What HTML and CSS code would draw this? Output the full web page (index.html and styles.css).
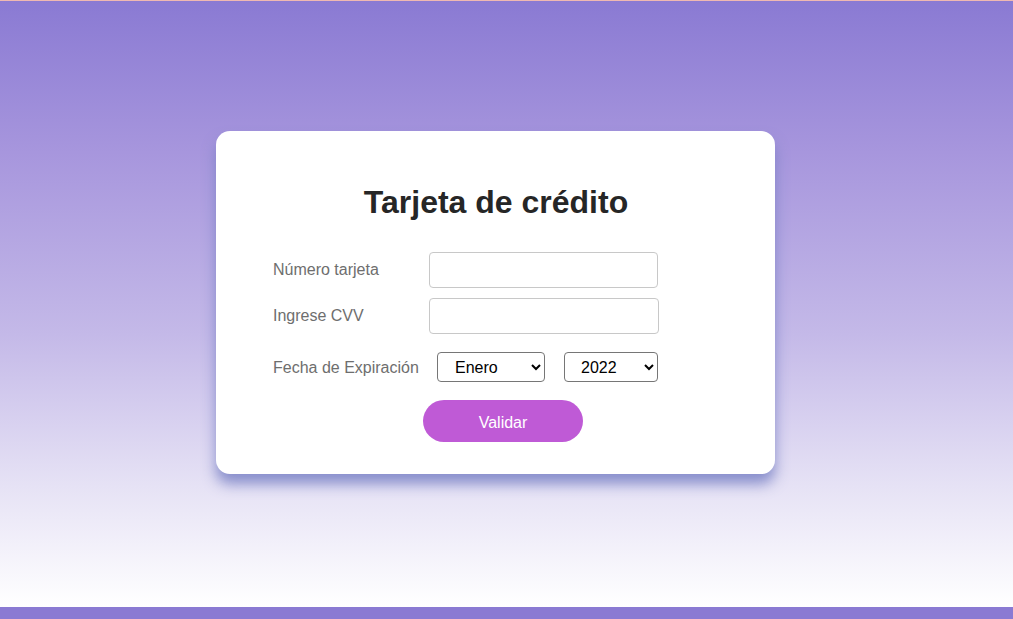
FILE: index.html
```html
<!DOCTYPE html>
<html lang="es">
<head>
<meta charset="utf-8">
<title>Tarjeta de crédito</title>
<link rel="stylesheet" href="styles.css">
</head>
<body>
<div class="topline"></div>
<main class="page">
  <form class="card">
    <h1 class="title">Tarjeta de crédito</h1>
    <div class="row">
      <label class="label">Número tarjeta</label>
      <input class="field" type="text">
    </div>
    <div class="row row-cvv">
      <label class="label">Ingrese CVV</label>
      <input class="field field-cvv" type="text">
    </div>
    <div class="row row-date">
      <label class="label label-date">Fecha de Expiración</label>
      <select class="sel sel-month"><option>Enero</option></select>
      <select class="sel sel-year"><option>2022</option></select>
    </div>
    <div class="actions">
      <button class="btn" type="button">Validar</button>
    </div>
  </form>
</main>
<div class="bottomband"></div>
</body>
</html>
```
FILE: styles.css
```css
html, body {
  margin: 0;
  padding: 0;
  height: 619px;
  overflow: hidden;
}
body {
  font-family: "Liberation Sans", Arial, sans-serif;
  display: flex;
  flex-direction: column;
  background: #8a7ad3;
}
.topline {
  height: 1px;
  background: #efb9b2;
}
.page {
  height: 606px;
  background: linear-gradient(to bottom, #8a7ad3 0%, #a796dd 25%, #c4b9e8 55%, #e6e2f5 80%, #ffffff 100%);
  display: flex;
  align-items: flex-start;
  padding-top: 130px;
  padding-left: 216px;
  box-sizing: border-box;
}
.card {
  width: 559px;
  height: 343px;
  box-sizing: border-box;
  background: #fff;
  border-radius: 14px;
  box-shadow: 0 10px 14px rgba(120, 128, 196, 0.85);
  padding: 53px 0 0 57px;
  display: flex;
  flex-direction: column;
}
.title {
  margin: 0 0 31px 0;
  font-size: 32px;
  line-height: 37px;
  font-weight: bold;
  color: #262626;
  text-align: center;
  width: 446px;
}
.row {
  display: flex;
  align-items: center;
  height: 36px;
}
.row-cvv {
  margin-top: 10px;
}
.row-date {
  margin-top: 18px;
  height: 30px;
}
.label {
  width: 156px;
  font-size: 16px;
  color: #6e6e6e;
}
.label-date {
  width: 164px;
  padding-top: 2px;
}
.field {
  width: 229px;
  height: 36px;
  box-sizing: border-box;
  border: 1px solid #c8c8c8;
  border-radius: 4px;
  background: #fff;
  font-size: 16px;
  padding: 0 8px;
}
.field-cvv {
  width: 230px;
}
.sel {
  height: 30px;
  box-sizing: border-box;
  border: 1px solid #767676;
  border-radius: 4px;
  background: #fff;
  font-family: "Liberation Sans", Arial, sans-serif;
  font-size: 16px;
  color: #000;
  padding: 0 0 0 13px;
}
.sel-month {
  width: 108px;
}
.sel-year {
  width: 94px;
  margin-left: 19px;
  padding-left: 12px;
}
.actions {
  margin-top: 18px;
  display: flex;
  padding-left: 150px;
}
.btn {
  width: 160px;
  height: 42px;
  border: none;
  border-radius: 21px;
  background: #bf5ad6;
  color: #fff;
  font-family: "Liberation Sans", Arial, sans-serif;
  font-size: 16px;
  padding-top: 5px;
}
.bottomband {
  height: 12px;
  background: #8a7ad3;
}
```
